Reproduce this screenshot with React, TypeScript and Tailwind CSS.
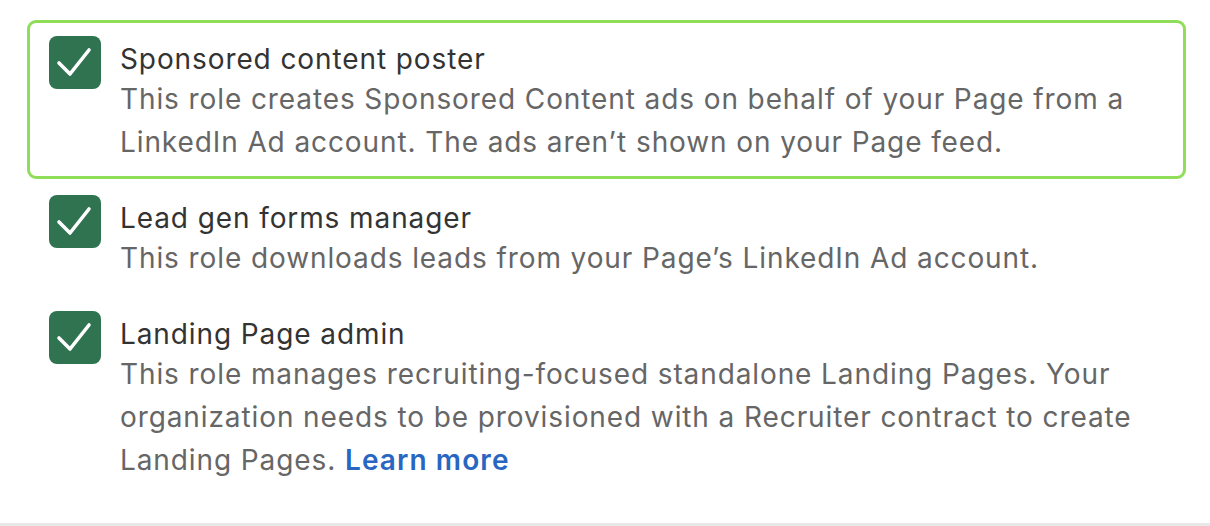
const roles = [
  {
    title: 'Sponsored content poster',
    description: 'This role creates Sponsored Content ads on behalf of your Page from a LinkedIn Ad account. The ads aren’t shown on your Page feed.',
    focused: true,
  },
  {
    title: 'Lead gen forms manager',
    description: 'This role downloads leads from your Page’s LinkedIn Ad account.',
    focused: false,
  },
  {
    title: 'Landing Page admin',
    description:
      'This role manages recruiting-focused standalone Landing Pages. Your organization needs to be provisioned with a Recruiter contract to create Landing Pages.',
    focused: false,
    learnMore: true,
  },
]

function Checkbox() {
  return (
    <div className="w-[52px] h-[53px] shrink-0 rounded-[8px] bg-[#2f7350] flex items-center justify-center">
      <svg width="52" height="53" viewBox="0 0 52 53" fill="none">
        <path d="M10 27 L21 38 L40 14" stroke="white" strokeWidth="3.6" strokeLinecap="round" strokeLinejoin="round" />
      </svg>
    </div>
  )
}

export default function App() {
  return (
    <div className="w-[1210px] h-[526px] bg-white flex flex-col" style={{ fontFamily: 'Inter, "Noto Sans", sans-serif' }}>
      <div className="flex-1 pt-[20px] pl-[27px] pr-[24px]">
        {roles.map((role) => (
          <div
            key={role.title}
            className={
              'flex gap-[19px] rounded-[9px] border-[3px] pl-[19px] pr-4 pt-[13px] pb-[12px] ' +
              (role.focused ? 'border-[#90dd5a]' : 'border-transparent')
            }
          >
            <Checkbox />
            <div className="flex flex-col pt-[5px] text-[28px] tracking-[0.9px]">
              <div className="leading-[37px] text-[#333333]">{role.title}</div>
              <div className="leading-[43px] text-[#666666]">
                {role.description}
                {role.learnMore && (
                  <>
                    {' '}
                    <a href="#" className="font-semibold tracking-[1.1px] text-[#2966c2]">
                      Learn more
                    </a>
                  </>
                )}
              </div>
            </div>
          </div>
        ))}
      </div>
      <div className="h-[3px] bg-[#e8e8e8]" />
    </div>
  )
}
